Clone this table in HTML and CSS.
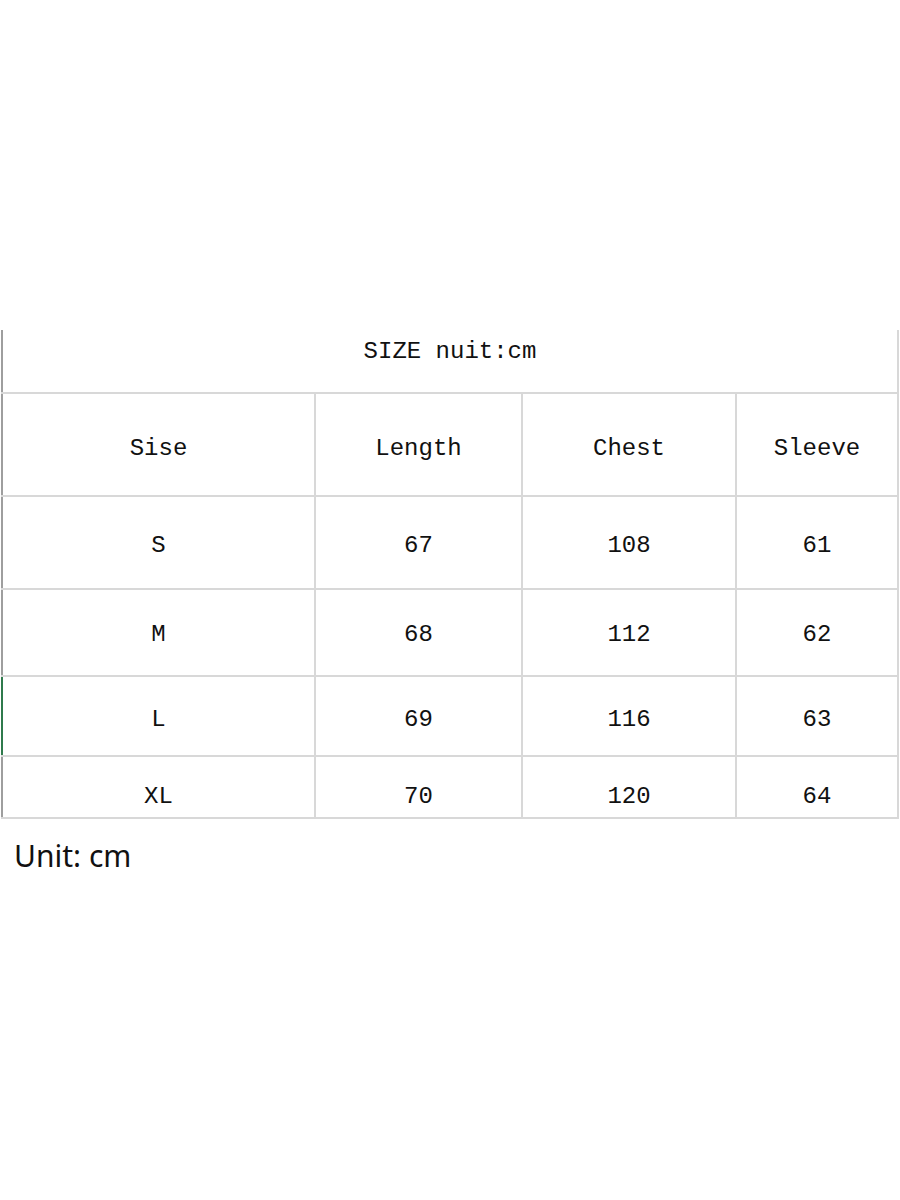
FILE: index.html
```html
<!DOCTYPE html>
<html>
<head>
<meta charset="utf-8">
<link rel="stylesheet" href="styles.css">
</head>
<body>
<div class="page">
  <div class="chart">
    <div class="cell title first">SIZE nuit:cm</div>
    <div class="cell head first">Sise</div>
    <div class="cell head">Length</div>
    <div class="cell head">Chest</div>
    <div class="cell head">Sleeve</div>

    <div class="cell r-s first">S</div>
    <div class="cell r-s">67</div>
    <div class="cell r-s">108</div>
    <div class="cell r-s">61</div>

    <div class="cell r-m first">M</div>
    <div class="cell r-m">68</div>
    <div class="cell r-m">112</div>
    <div class="cell r-m">62</div>

    <div class="cell r-l first active">L</div>
    <div class="cell r-l">69</div>
    <div class="cell r-l">116</div>
    <div class="cell r-l">63</div>

    <div class="cell r-xl first">XL</div>
    <div class="cell r-xl">70</div>
    <div class="cell r-xl">120</div>
    <div class="cell r-xl">64</div>
  </div>
  <p class="unit">Unit: cm</p>
</div>
</body>
</html>
```

FILE: styles.css
```css
html, body {
  margin: 0;
  padding: 0;
  background: #ffffff;
}

.page {
  padding-top: 330px;
}

.chart {
  margin-left: 1px;
  width: 898px;
  box-sizing: border-box;
  display: grid;
  grid-template-columns: 313px 205px 212px 160px;
  grid-template-rows: 62px 101px 91px 85px 78px 60px;
  gap: 2px;
  padding: 0 2px 2px 0;
  background: #d8d8d8;
  font-family: "Liberation Mono", "DejaVu Sans Mono", monospace;
  font-size: 24px;
  color: #111;
}

.cell {
  background: #ffffff;
  display: flex;
  align-items: center;
  justify-content: center;
  padding-top: 6px;
  box-sizing: border-box;
}

.first {
  border-left: 2px solid #9e9e9e;
}

.first.active {
  border-left-color: #2f7a4c;
}

.title {
  grid-column: 1 / -1;
  padding-top: 0;
  padding-bottom: 20px;
}

.head {
  padding-top: 8px;
}

.r-s { padding-top: 6px; }
.r-m { padding-top: 4px; }
.r-l { padding-top: 6px; }
.r-xl { padding-top: 18px; }

.unit {
  margin: 18px 0 0 14px;
  font-family: "Noto Sans", "Open Sans", sans-serif;
  font-size: 30px;
  line-height: 38px;
  color: #111;
}
```
